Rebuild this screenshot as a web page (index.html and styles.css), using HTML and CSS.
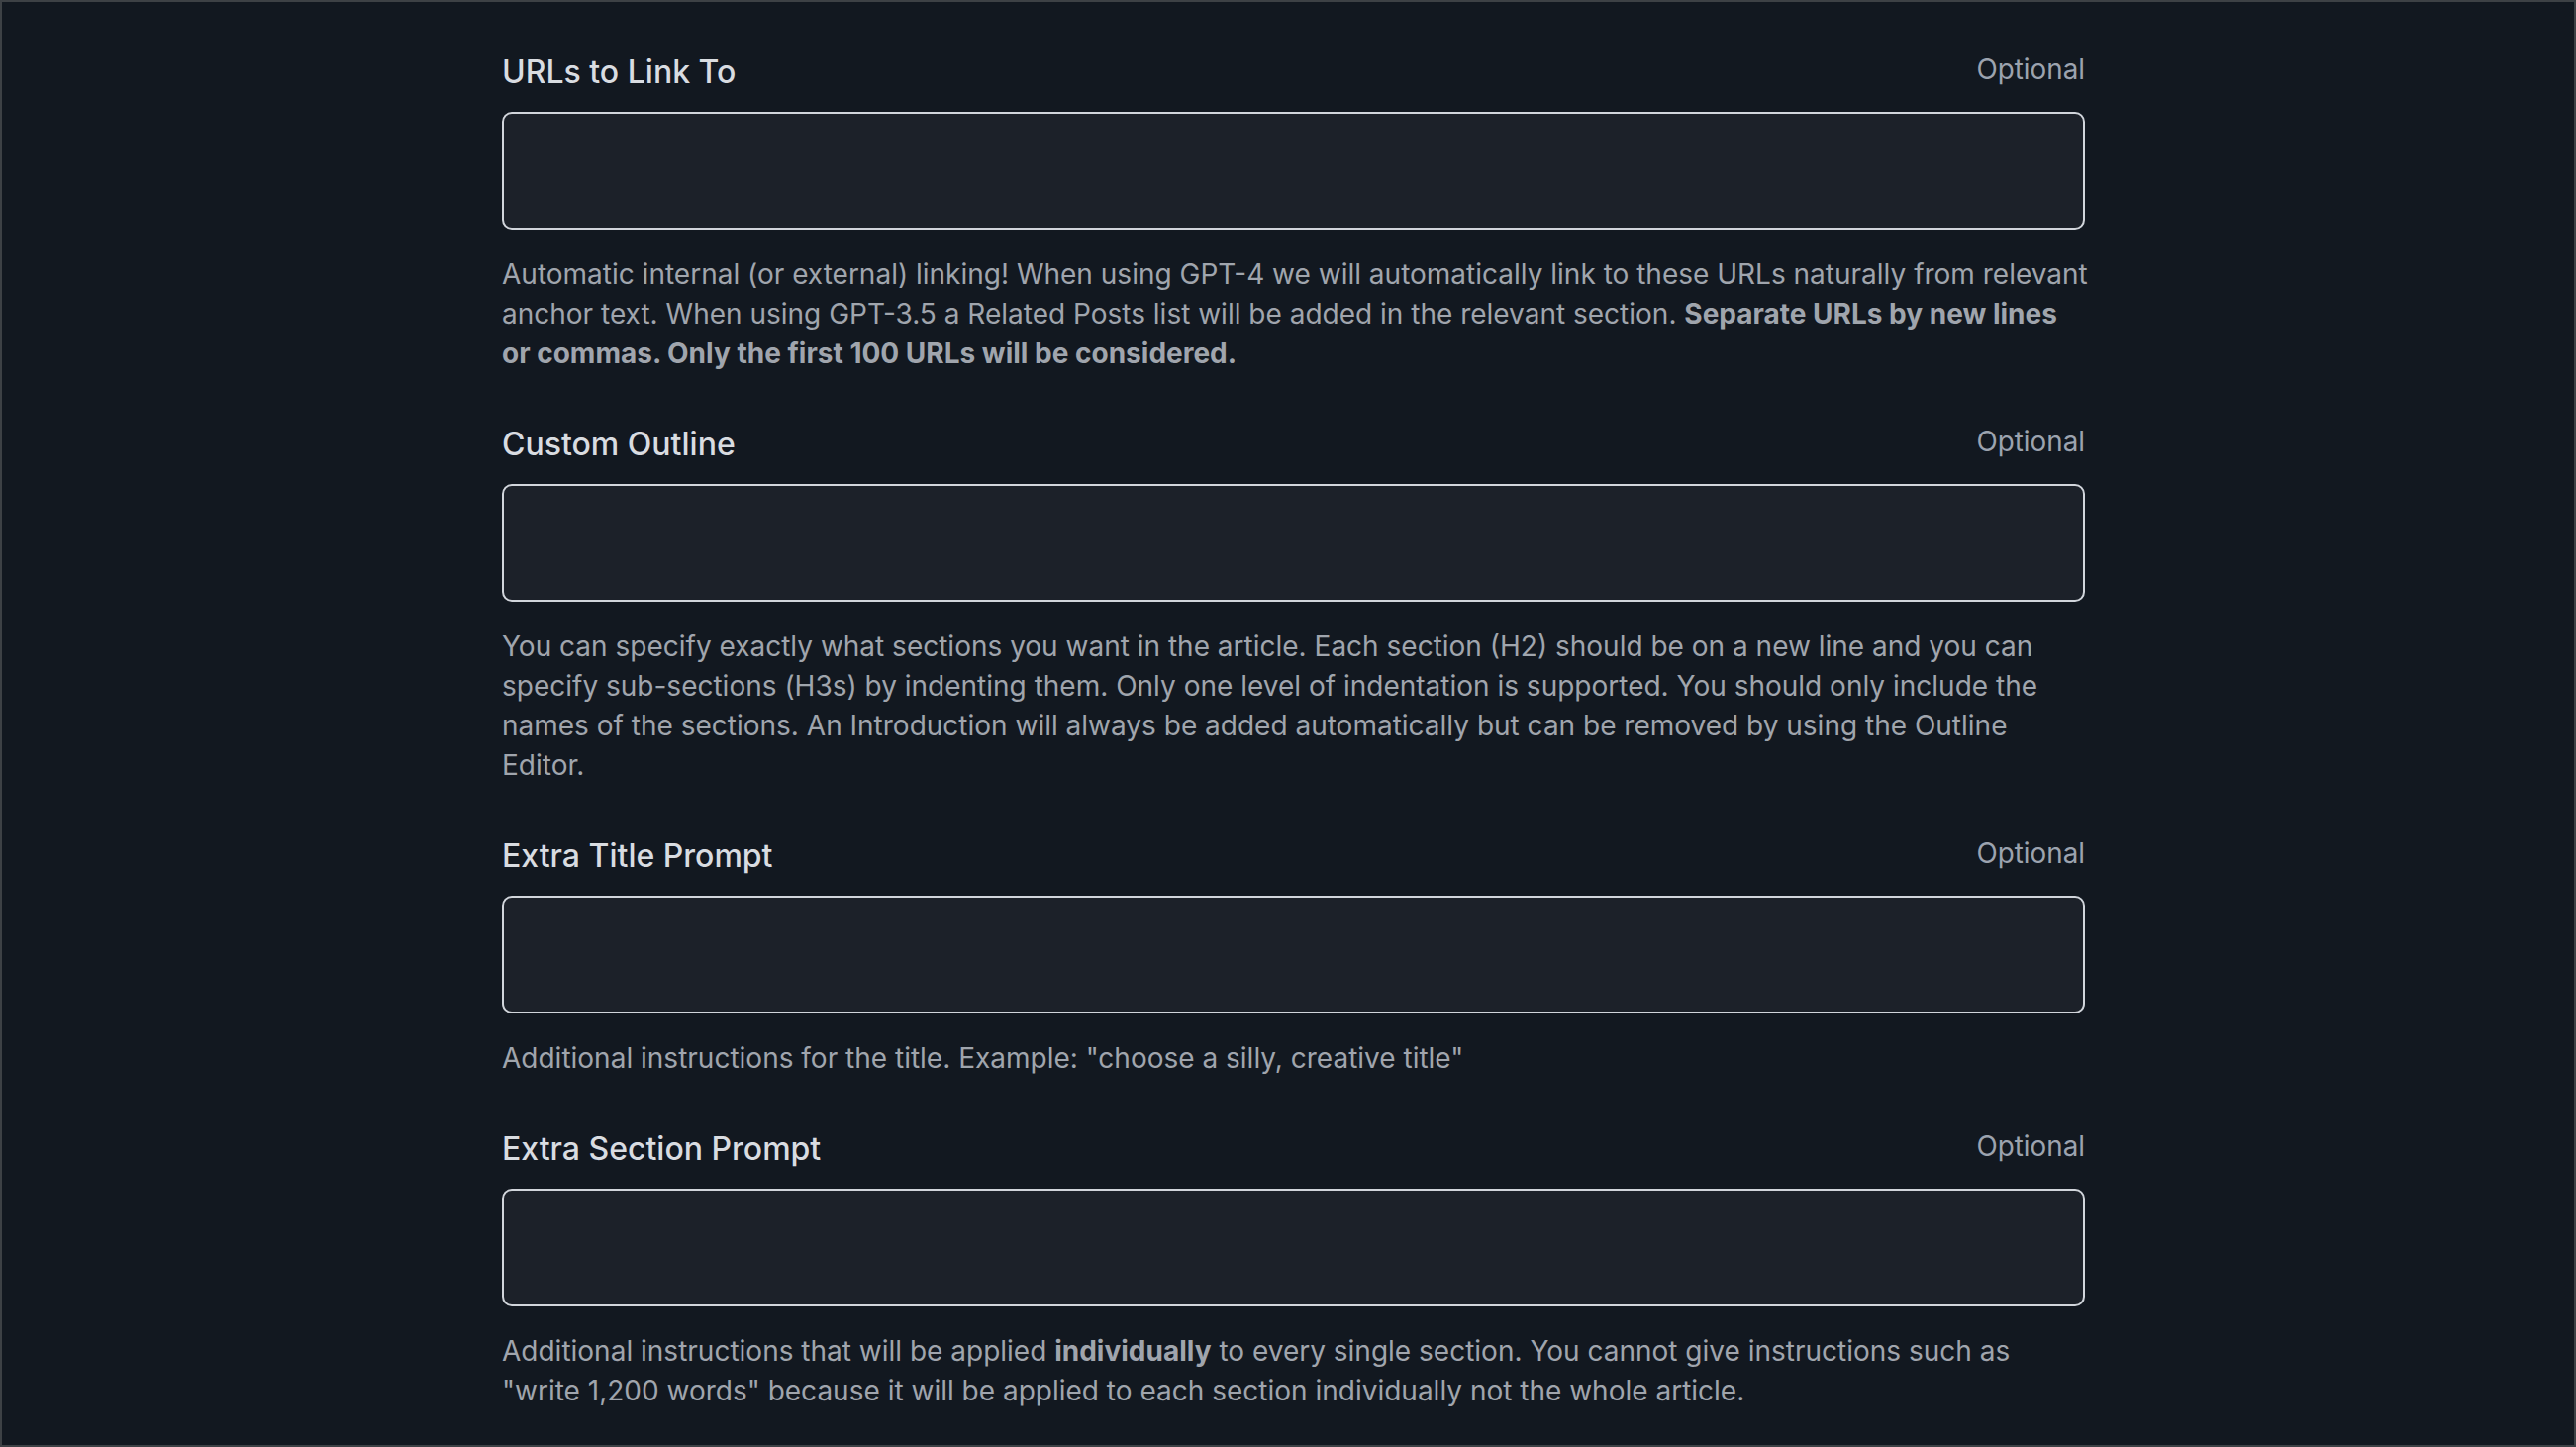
FILE: index.html
```html
<!DOCTYPE html>
<html lang="en">
<head>
<meta charset="utf-8">
<title>Article settings</title>
<link rel="stylesheet" href="styles.css">
</head>
<body>
<div class="frame">
  <form class="column">
    <div class="field">
      <div class="field-head">
        <label class="label">URLs to Link To</label>
        <span class="optional">Optional</span>
      </div>
      <div class="input"></div>
      <p class="help">Automatic internal (or external) linking! When using GPT-4 we will automatically link to these URLs naturally from relevant anchor text. When using GPT-3.5 a Related Posts list will be added in the relevant section. <strong>Separate URLs by new lines or commas. Only the first 100 URLs will be considered.</strong></p>
    </div>
    <div class="field">
      <div class="field-head">
        <label class="label">Custom Outline</label>
        <span class="optional">Optional</span>
      </div>
      <div class="input"></div>
      <p class="help">You can specify exactly what sections you want in the article. Each section (H2) should be on a new line and you can specify sub-sections (H3s) by indenting them. Only one level of indentation is supported. You should only include the names of the sections. An Introduction will always be added automatically but can be removed by using the Outline Editor.</p>
    </div>
    <div class="field">
      <div class="field-head">
        <label class="label">Extra Title Prompt</label>
        <span class="optional">Optional</span>
      </div>
      <div class="input"></div>
      <p class="help">Additional instructions for the title. Example: "choose a silly, creative title"</p>
    </div>
    <div class="field">
      <div class="field-head">
        <label class="label">Extra Section Prompt</label>
        <span class="optional">Optional</span>
      </div>
      <div class="input"></div>
      <p class="help">Additional instructions that will be applied <strong>individually</strong> to every single section. You cannot give instructions such as "write 1,200 words" because it will be applied to each section individually not the whole article.</p>
    </div>
  </form>
</div>
</body>
</html>
```

FILE: styles.css
```css
html, body {
  margin: 0;
  padding: 0;
  background: #121820;
}

.frame {
  box-sizing: border-box;
  height: 1462px;
  border: 2px solid #3d4145;
  background: #121820;
  overflow: hidden;
  padding-top: 46px;
  font-family: Inter, "Noto Sans", sans-serif;
}

.column {
  width: 1599px;
  margin-left: 505px;
  display: flex;
  flex-direction: column;
  gap: 47px;
}

.field {
  display: flex;
  flex-direction: column;
}

.field-head {
  display: flex;
  justify-content: space-between;
  align-items: baseline;
  height: 46px;
}

.label {
  font-size: 32px;
  line-height: 46px;
  font-weight: 500;
  color: #d9dce1;
  position: relative;
  top: 2px;
}

.optional {
  font-size: 27.8px;
  line-height: 40px;
  color: #9ca3af;
  position: relative;
  top: -2px;
}

.input {
  margin-top: 19px;
  box-sizing: border-box;
  height: 119px;
  border: 2px solid #d1d5db;
  border-radius: 10px;
  background: #1c2129;
}

.help {
  margin: 25px -4px 0 0;
  font-size: 28px;
  line-height: 40px;
  color: #a0a5ad;
}

.help strong {
  font-weight: 700;
}
```
